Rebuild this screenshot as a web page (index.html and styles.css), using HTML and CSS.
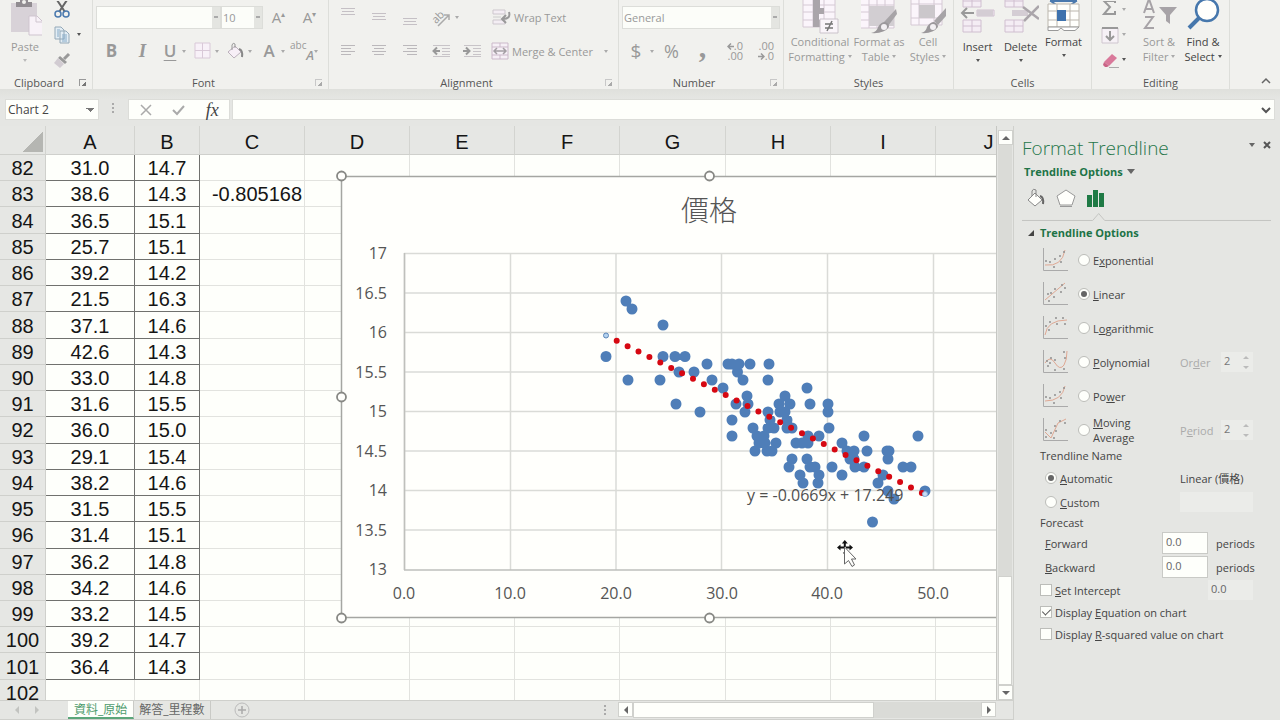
FILE: index.html
```html
<!DOCTYPE html>
<html lang="zh-Hant">
<head>
<meta charset="utf-8">
<title>Format Trendline</title>
<link rel="stylesheet" href="styles.css">
</head>
<body>
<header class="ribbon">
  <section class="group clipboard">
    <div class="group-body">
      <button class="big low" type="button"><svg width="34" height="39" viewBox="0 0 34 39"><path d="M3 3h26v29H3z" fill="#d8d2d8"/><path d="M8 7V2h4V-3h8v5h4v5z" fill="#918c91"/><circle cx="16" cy="2" r="2" fill="#f1f1ee"/><path d="M21 16h8l6 6v13H21z" fill="#f8f2f8" stroke="#cfc5cf"/><path d="M28 16v6h6" fill="none" stroke="#cfc5cf"/></svg><span class="dim">Paste</span><i class="caret pale"></i></button>
      <div class="stack">
        <button type="button" aria-label="Cut"><svg width="18" height="18" viewBox="0 0 18 18"><path d="M4-1l8 12M14-1L6 11" stroke="#666" stroke-width="2" fill="none"/><circle cx="5" cy="13" r="3" fill="none" stroke="#4a79ae" stroke-width="1.5"/><circle cx="13" cy="13" r="3" fill="none" stroke="#4a79ae" stroke-width="1.5"/></svg></button>
        <button type="button" aria-label="Copy"><svg width="18" height="18" viewBox="0 0 18 18"><path d="M2 1h6l3 3v9H2zM7 5h6l3 3v9H7z" fill="#e3edf4" stroke="#94a9b8"/><path d="M4 4h3M4 6h2M4 8h2M4 10h2M9 9h5M9 11h5M9 13h5M9 15h5" stroke="#86abc8"/></svg><i class="caret dark"></i></button>
        <button type="button" aria-label="Format Painter"><svg width="18" height="18" viewBox="0 0 18 18"><path d="M16 3l-5 5" stroke="#999" stroke-width="3"/><path d="M7 5l7 6-2 2-7-6z" fill="#999"/><path d="M5 7l6 6-4 4-6-5z" fill="#d2ccd2"/></svg></button>
      </div>
    </div>
    <footer><span>Clipboard</span><i class="launch strong"></i></footer>
  </section>
  <section class="group font">
    <div class="group-body rows">
      <div class="row">
        <select class="pick face" aria-label="Font"><option></option></select><select class="pick size" aria-label="Font size"><option>10</option></select>
        <button class="glyph grow" type="button">A<sup>▴</sup></button><button class="glyph grow" type="button">A<sup>▾</sup></button>
      </div>
      <div class="row">
        <button class="glyph tool b" type="button">B</button><button class="glyph tool it" type="button">I</button>
        <button class="glyph split un" type="button"><span>U</span><i class="caret"></i></button>
        <button class="split" type="button" aria-label="Borders"><svg width="24" height="18" viewBox="0 0 24 18"><path d="M4 1h15v15H4zM11.500 1v15M4 8.500h15" fill="#f8f1f8" stroke="#d9c9d8"/></svg><i class="caret"></i></button>
        <button class="split" type="button" aria-label="Fill colour"><svg width="24" height="18" viewBox="0 0 24 18"><path d="M4 10l7-6 6 6-7 6z" fill="#f7eff7" stroke="#bbb0bb"/><path d="M8 8V3q1-3 3-1v4" fill="none" stroke="#999"/><path d="M15 7q4 1 3 8" fill="none" stroke="#888" stroke-width="2"/></svg><i class="caret"></i></button>
        <button class="glyph split" type="button"><span>A</span><i class="caret"></i></button>
        <button class="glyph split phon" type="button"><span><small>abc</small><em>A</em></span><i class="caret"></i></button>
      </div>
    </div>
    <footer><span>Font</span><i class="launch"></i></footer>
  </section>
  <section class="group align">
    <div class="group-body align-grid">
      <button type="button" aria-label="Top align"><svg width="16" height="18" viewBox="0 0 16 18"><path d="M1 0.500h14M2 3.500h12M1 6.500h14" stroke="#c5c0c5"/></svg></button>
      <button type="button" aria-label="Middle align"><svg width="16" height="18" viewBox="0 0 16 18"><path d="M1 5.500h14M2 8.500h12M1 11.500h14" stroke="#c5c0c5"/></svg></button>
      <button type="button" aria-label="Bottom align"><svg width="16" height="18" viewBox="0 0 16 18"><path d="M1 10.500h14M2 13.500h12M1 16.500h14" stroke="#c5c0c5"/></svg></button>
      <button class="orient" type="button" aria-label="Orientation"><svg width="22" height="20" viewBox="0 0 22 20"><text x="2" y="16" transform="rotate(-45 5 13)" font-size="11" fill="#999">ab</text><path d="M7 19L18 8M13 8h5v5" fill="none" stroke="#aaa" stroke-width="1.500"/></svg><i class="caret"></i></button>
      <button class="wide" type="button"><svg width="20" height="18" viewBox="0 0 20 18"><path d="M2 2h12v4H2zM2 12h12v4H2z" fill="#f4eef4" stroke="#cdc7cd"/><path d="M2 9h8" stroke="#ccc"/><path d="M18 4q2 7-6 7M15 7l-4 4 4 4" fill="none" stroke="#999" stroke-width="2"/></svg>Wrap Text</button>
      <button type="button" aria-label="Align left"><svg width="16" height="12" viewBox="0 0 16 12"><path d="M1 .5h14M1 3.500h10M1 6.500h14M1 9.500h10" stroke="#bbb8bb"/></svg></button>
      <button type="button" aria-label="Center"><svg width="16" height="12" viewBox="0 0 16 12"><path d="M1 .5h14M3 3.500h10M1 6.500h14M3 9.500h10" stroke="#bbb8bb"/></svg></button>
      <button type="button" aria-label="Align right"><svg width="16" height="12" viewBox="0 0 16 12"><path d="M1 .5h14M5 3.500h10M1 6.500h14M5 9.500h10" stroke="#bbb8bb"/></svg></button>
      <button type="button" aria-label="Decrease indent"><svg width="18" height="14" viewBox="0 0 18 14"><path d="M1 1.500h17M10 4.500h8M10 7.500h8M10 10.500h8M1 12.500h17" stroke="#c8c4c8"/><path d="M1 7h7M5 3.500L1.500 7 5 10.500" fill="none" stroke="#999" stroke-width="2"/></svg></button>
      <button type="button" aria-label="Increase indent"><svg width="18" height="14" viewBox="0 0 18 14"><path d="M1 1.500h17M10 4.500h8M10 7.500h8M10 10.500h8M1 12.500h17" stroke="#c8c4c8"/><path d="M0 7h7M3 3.500L6.500 7 3 10.500" fill="none" stroke="#999" stroke-width="2"/></svg></button>
      <button class="wide" type="button"><svg width="18" height="18" viewBox="0 0 18 18"><path d="M1 1h16v16H1zM1 5h16M1 13h16M9 1v4M9 13v4" fill="#f6f0f6" stroke="#cbb9ca"/><path d="M3 9h12M6 6L3 9l3 3M12 6l3 3-3 3" fill="none" stroke="#a49fa4" stroke-width="1.500"/></svg>Merge &amp; Center<i class="caret end"></i></button>
    </div>
    <footer><span>Alignment</span><i class="launch"></i></footer>
  </section>
  <section class="group number">
    <div class="group-body rows">
      <div class="row"><select class="pick general" aria-label="Number format"><option>General</option></select></div>
      <div class="row">
        <button class="glyph split cur" type="button"><span>$</span><i class="caret"></i></button><button class="glyph tool pct" type="button">%</button><button class="glyph tool comma" type="button">,</button>
        <button class="dec" type="button"><span><svg width="7" height="7" viewBox="0 0 7 7"><path d="M7 3.500H1M4 .5l-3 3 3 3" fill="none" stroke="#999" stroke-width="1.500"/></svg>.0</span><span>.00</span></button>
        <button class="dec" type="button"><span>.00</span><span><svg width="7" height="7" viewBox="0 0 7 7"><path d="M0 3.500h6M3 .5l3 3-3 3" fill="none" stroke="#999" stroke-width="1.500"/></svg>.0</span></button>
      </div>
    </div>
    <footer><span>Number</span><i class="launch"></i></footer>
  </section>
  <section class="group styles">
    <div class="group-body">
      <button class="big" type="button"><svg width="38" height="34" viewBox="0 0 38 34"><path d="M2-3h32v30H2zM12-3v30M23-3v30M2 5h32M2 12h32M2 20h32" fill="#fbf5fb" stroke="#d5c9d4"/><path d="M12 0h7v8h4v6h-5v6h1v7h-7z" fill="#aaa5aa"/><path d="M19 19h18v14H19z" fill="#faf5fa" stroke="#cbc3cb"/><path d="M24 24h8M24 28h8M31 21l-5 10" stroke="#777" stroke-width="1.500"/></svg><span class="dim">Conditional</span><span class="dim">Formatting <i class="caret"></i></span></button>
      <button class="big" type="button"><svg width="36" height="34" viewBox="0 0 36 34"><path d="M-1-3h34v31H-1zM8-3v31M16-3v31M24-3v31M-1 5h34M-1 12h34M-1 20h34" fill="#fbf5fb" stroke="#d5c9d4"/><path d="M8 6h25v20H8z" fill="#d2ced2"/><path d="M35 9L23 22l4 4 9-12z" fill="#a7a4a7"/><path d="M24 22q4 1 4 5-5 7-18 6 6-1 7-6 3-5 7-5z" fill="#9b989b"/><circle cx="23" cy="27" r="3" fill="#f3f0f3"/></svg><span class="dim">Format as</span><span class="dim">Table <i class="caret"></i></span></button>
      <button class="big" type="button"><svg width="36" height="34" viewBox="0 0 36 34"><path d="M1-3h31v28H1zM9-3v28M24-3v28M1 4h31M1 18h31" fill="#fbf5fb" stroke="#d5c9d4"/><path d="M9 5h16v13H9z" fill="#cbc7cb"/><path d="M36 8L24 21l4 4 8-9z" fill="#a7a4a7"/><path d="M24 22q4 1 4 5-5 7-17 6 5-1 6-6 3-5 7-5z" fill="#9b989b"/><circle cx="23" cy="27" r="3" fill="#f3f0f3"/></svg><span class="dim">Cell</span><span class="dim">Styles <i class="caret"></i></span></button>
    </div>
    <footer><span>Styles</span></footer>
  </section>
  <section class="group cells">
    <div class="group-body">
      <button class="big low" type="button"><svg width="36" height="39" viewBox="0 0 36 39"><path d="M3-5h18V7H3zM12-5V7M3 1h18M3 20h18v12H3zM12 20v12M3 26h18M17 10h17v6H17zM25 10v6" fill="#f4edf4" stroke="#d0bfd0"/><path d="M17 10h16v6H17z" fill="#d4cdd4"/><path d="M14 13H3M7 8l-5 5 5 5" fill="none" stroke="#999" stroke-width="2"/></svg><span>Insert</span><i class="caret dark"></i></button>
      <button class="big low" type="button"><svg width="36" height="39" viewBox="0 0 36 39"><path d="M2-5h18V7H2zM11-5V7M2 1h18M2 20h18v12H2zM11 20v12M2 26h18" fill="#f4edf4" stroke="#d0bfd0"/><path d="M9 10h16v6H9z" fill="#d4cdd4"/><path d="M20 7l16 12M36 6L21 21" fill="none" stroke="#aaa5aa" stroke-width="2.500"/></svg><span>Delete</span><i class="caret dark"></i></button>
      <button class="big" type="button"><svg width="36" height="34" viewBox="0 0 36 34"><path d="M4 1h27M10-3L5 1l5 4M25-3l5 4-5 4" fill="none" stroke="#4a79ae" stroke-width="2"/><path d="M2 4h31v23H2zM11 4v23M24 4v23M2 11h31M2 20h31" fill="#fffffc" stroke="#bbb6ad"/><path d="M11 10h9v11h-9z" fill="#3e72ad"/><path d="M2 27h31l-4 3.500H18L15 28l-3 2.500H2z" fill="#fff" stroke="#999"/></svg><span>Format</span><i class="caret dark"></i></button>
    </div>
    <footer><span>Cells</span></footer>
  </section>
  <section class="group editing">
    <div class="group-body">
      <div class="stack">
        <button type="button" aria-label="AutoSum"><svg width="18" height="18" viewBox="0 0 18 18"><path d="M14 2V0H3l6 6-6 7h11v-3" fill="none" stroke="#999" stroke-width="2"/></svg><i class="caret"></i></button>
        <button type="button" aria-label="Fill"><svg width="18" height="18" viewBox="0 0 18 18"><path d="M1 2h16v15H1z" fill="#f6f1f6" stroke="#cfc6cf"/><path d="M1 2h16" stroke="#999" stroke-width="2"/><path d="M9 5v8M5 10l4 4 4-4" fill="none" stroke="#999" stroke-width="2"/></svg><i class="caret"></i></button>
        <button type="button" aria-label="Clear"><svg width="18" height="18" viewBox="0 0 18 18"><path d="M3 11l8-8 5 4-8 8z" fill="#d9799a"/><path d="M3 11l5 4-2 1H4l-2-2z" fill="#c96385"/><path d="M8 16.500h10" stroke="#aaa"/></svg><i class="caret dark"></i></button>
      </div>
      <button class="big" type="button"><svg width="38" height="34" viewBox="0 0 38 34"><path d="M4 13L9-1l5 14M6 9h7M5 17h8L5 28h9" fill="none" stroke="#a7a3a7" stroke-width="2"/><path d="M19 7h18l-7 8v9l-4-3v-6z" fill="#a7a3a7"/></svg><span class="dim">Sort &amp;</span><span class="dim">Filter <i class="caret"></i></span></button>
      <button class="big" type="button"><svg width="36" height="34" viewBox="0 0 36 34"><circle cx="22" cy="10" r="11" fill="#fffffc" stroke="#4677ac" stroke-width="2.500"/><path d="M14 18L4 28" stroke="#4677ac" stroke-width="4"/></svg><span>Find &amp;</span><span>Select <i class="caret dark"></i></span></button>
    </div>
    <footer><span>Editing</span></footer>
  </section>
  <button class="collapse" type="button" aria-label="Collapse ribbon"><svg width="10" height="8" viewBox="0 0 10 8"><path d="M1 6l4-4 4 4" fill="none" stroke="#666" stroke-width="1.500"/></svg></button>
</header>

<div class="formula">
  <select class="name-box" aria-label="Name box"><option>Chart 2</option></select>
  <span class="grip"></span>
  <div class="fx">
    <button type="button" aria-label="Cancel"><svg width="12" height="12" viewBox="0 0 12 12"><path d="M1 1l10 10M11 1L1 11" stroke="#aaa" stroke-width="1.500"/></svg></button>
    <button type="button" aria-label="Enter"><svg width="13" height="12" viewBox="0 0 13 12"><path d="M1 6l4 4 7-8" fill="none" stroke="#aaa" stroke-width="2"/></svg></button>
    <button class="fx-label" type="button">fx</button>
  </div>
  <div class="entry"><input type="text" aria-label="Formula bar"><svg width="10" height="8" viewBox="0 0 10 8"><path d="M1 2l4 4 4-4" fill="none" stroke="#555" stroke-width="2"/></svg></div>
</div>

<main class="work">
  <div class="book">
    <div class="view">
      <div class="sheet">
        <table>
          <colgroup><col class="c-row"><col class="c-a"><col class="c-b"><col class="c-n"><col class="c-n"><col class="c-n"><col class="c-n"><col class="c-w"><col class="c-n"><col class="c-n"><col></colgroup>
          <thead><tr><th class="corner"></th><th>A</th><th>B</th><th>C</th><th>D</th><th>E</th><th>F</th><th>G</th><th>H</th><th>I</th><th>J</th></tr></thead>
          <tbody>
            <tr><th>82<td>31.0<td>14.7<td><td><td><td><td><td><td><td>
            <tr><th>83<td>38.6<td>14.3<td>-0.805168<td><td><td><td><td><td><td>
            <tr><th>84<td>36.5<td>15.1<td><td><td><td><td><td><td><td>
            <tr><th>85<td>25.7<td>15.1<td><td><td><td><td><td><td><td>
            <tr><th>86<td>39.2<td>14.2<td><td><td><td><td><td><td><td>
            <tr><th>87<td>21.5<td>16.3<td><td><td><td><td><td><td><td>
            <tr><th>88<td>37.1<td>14.6<td><td><td><td><td><td><td><td>
            <tr><th>89<td>42.6<td>14.3<td><td><td><td><td><td><td><td>
            <tr><th>90<td>33.0<td>14.8<td><td><td><td><td><td><td><td>
            <tr><th>91<td>31.6<td>15.5<td><td><td><td><td><td><td><td>
            <tr><th>92<td>36.0<td>15.0<td><td><td><td><td><td><td><td>
            <tr><th>93<td>29.1<td>15.4<td><td><td><td><td><td><td><td>
            <tr><th>94<td>38.2<td>14.6<td><td><td><td><td><td><td><td>
            <tr><th>95<td>31.5<td>15.5<td><td><td><td><td><td><td><td>
            <tr><th>96<td>31.4<td>15.1<td><td><td><td><td><td><td><td>
            <tr><th>97<td>36.2<td>14.8<td><td><td><td><td><td><td><td>
            <tr><th>98<td>34.2<td>14.6<td><td><td><td><td><td><td><td>
            <tr><th>99<td>33.2<td>14.5<td><td><td><td><td><td><td><td>
            <tr><th>100<td>39.2<td>14.7<td><td><td><td><td><td><td><td>
            <tr><th>101<td>36.4<td>14.3<td><td><td><td><td><td><td><td>
            <tr class="blank"><th>102<td><td><td><td><td><td><td><td><td><td>
          </tbody>
        </table>
        <svg class="chart" width="748" height="454" viewBox="335 170 748 454" role="img" aria-label="價格">
          <rect x="341.500" y="176.500" width="736" height="441" fill="#fffffc" stroke="#a5a6a2" stroke-width="1.500"/>
          <text class="chart-title" x="709" y="221">價格</text>
          <path d="M404 253.500h673M404 293h673M404 332.500h673M404 372h673M404 411.500h673M404 451h673M404 490.500h673M404 530h673M404.500 253v317M510.500 253v317M616 253v317M721.500 253v317M827.500 253v317M933.500 253v317" stroke="#dadbd7" stroke-width="1.500" fill="none"/>
          <path d="M404 570h673M404.500 253v317" stroke="#bfc0bc" stroke-width="1.500"/>
          <g class="axis y"><text x="387" y="259">17</text><text x="387" y="299">16.5</text><text x="387" y="338">16</text><text x="387" y="378">15.5</text><text x="387" y="417">15</text><text x="387" y="457">14.5</text><text x="387" y="496">14</text><text x="387" y="536">13.5</text><text x="387" y="575">13</text></g>
          <g class="axis x"><text x="404" y="599">0.0</text><text x="510" y="599">10.0</text><text x="616" y="599">20.0</text><text x="722" y="599">30.0</text><text x="827" y="599">40.0</text><text x="933" y="599">50.0</text></g>
          <path class="points" d="M626 301h0M632 309h0M663 325h0M606 356.500h0M663 356.500h0M675 356.500h0M685 356.500h0M707 364h0M728 364h0M732 364h0M739 364h0M750 364h0M769 364h0M628 380h0M660 380h0M679 372h0M694 372h0M712 380h0M723 388h0M737.500 372h0M743 380h0M768 380h0M676 404h0M700 412h0M732 420h0M732 436h0M747 396h0M736 404h0M748 404h0M745 412h0M785 396h0M779 404h0M790 404h0M780 412h0M785 412h0M768 412h0M770 420h0M787 420h0M753 428h0M768 428h0M774 428h0M787 428h0M792 428h0M757 436h0M764 436h0M759 443h0M765 443h0M776 443h0M755 451h0M767 451h0M772 451h0M807 388h0M810 404h0M828 404h0M828 412h0M829 428h0M808 436h0M819 436h0M864 436h0M918 436h0M796 443h0M802 443h0M808 443h0M842 443h0M867 451h0M847 451h0M854 451h0M887 451h0M889 451h0M792 459h0M807 459h0M850 459h0M854 459h0M888 459h0M789 467h0M810 467h0M815 467h0M832 467h0M855 467h0M864 467h0M903 467h0M911 467h0M800 475h0M819 475h0M842 475h0M883 475h0M803 483h0M818 483h0M878 483h0M888 491h0M925 491h0M894 499h0M872.500 522h0"/>
          <path class="trend" d="M616.700 340.700L922 493"/>
          <circle cx="606" cy="335.500" r="2.500" fill="#b5d3f0" stroke="#5c86b8"/><circle cx="925" cy="494" r="2.500" fill="#c9def5" stroke="#8db0dc"/>
          <text class="equation" x="747" y="501">y = -0.0669x + 17.249</text>
          <g fill="#fffffc" stroke="#888985" stroke-width="1.800"><circle cx="341.500" cy="176" r="4.500"/><circle cx="709.500" cy="176" r="4.500"/><circle cx="341.500" cy="397" r="4.500"/><circle cx="341.500" cy="618" r="4.500"/><circle cx="709.500" cy="618" r="4.500"/></g>
          <path d="M844.800 540l3 3.500h-2v3.500h-2v-3.500h-2zM837 547.500l3.500-3v2h3.500v2h-3.500v2zM853 547.500l-3.500-3v2H846v2h3.500v2zM844.800 555l-2-2.500h4z" fill="#111"/>
          <path d="M844.500 547v17l4-3.500 3.500 6 2.500-1.500-3-6h4.500z" fill="#fffffc" stroke="#666"/>
        </svg>
      </div>
      <div class="vscroll"><button type="button" aria-label="Scroll up"><i class="tri up"></i></button><span class="track"></span><span class="thumb"></span><button type="button" aria-label="Scroll down"><i class="tri down"></i></button></div>
    </div>
    <nav class="tabs">
      <div class="tab-nav"><i class="tri left faint"></i><i class="tri right faint"></i></div>
      <button class="tab active" type="button">資料_原始</button><button class="tab" type="button">解答_里程數</button>
      <button class="add" type="button" aria-label="New sheet"><svg width="16" height="16" viewBox="0 0 16 16"><circle cx="8" cy="8" r="7" fill="none" stroke="#bbb"/><path d="M8 4v8M4 8h8" stroke="#aaa" stroke-width="1.500"/></svg></button>
      <span class="grip"></span>
      <div class="hscroll"><button type="button" aria-label="Scroll left"><i class="tri left"></i></button><span class="thumb"></span><span class="track"></span><button type="button" aria-label="Scroll right"><i class="tri right"></i></button></div>
    </nav>
  </div>

  <aside class="pane">
    <div class="pane-head"><h1>Format Trendline</h1><button type="button" aria-label="Pane menu"><i class="tri down slim"></i></button><button type="button" aria-label="Close"><svg width="8" height="8" viewBox="0 0 8 8"><path d="M1 1l6 6M7 1L1 7" stroke="#555" stroke-width="2"/></svg></button></div>
    <button class="pane-sub" type="button">Trendline Options <i class="tri down large"></i></button>
    <div class="pane-icons">
      <button type="button" aria-label="Fill and line"><svg width="20" height="22" viewBox="0 0 20 22"><path d="M2 13l7-7 7 7-7 6z" fill="#fffffc" stroke="#888"/><path d="M6 9V4q1-3 4-1v7" fill="none" stroke="#888"/><path d="M14 9q4 1 3 8" fill="none" stroke="#666" stroke-width="2"/></svg></button>
      <button type="button" aria-label="Effects"><svg width="20" height="22" viewBox="0 0 20 22"><path d="M10 3l9 6-3 9H4L1 9z" fill="#fffffc" stroke="#999"/><path d="M4 19.500h12" stroke="#999"/></svg></button>
      <button type="button" aria-label="Trendline options"><svg width="20" height="22" viewBox="0 0 20 22"><path d="M1 8h5v12H1zM7 3h5v17H7zM13 6h5v14h-5z" fill="#1f7a45"/></svg></button>
    </div>
    <svg class="notch" width="250" height="9" viewBox="0 0 250 9" aria-hidden="true"><path d="M0 8.500h71l6-7 6 7h167" fill="none" stroke="#c4c5c2"/></svg>
    <h2><i class="open"></i>Trendline Options</h2>
    <div class="kinds">
      <div class="kind"><svg width="26" height="24" viewBox="0 0 26 24"><path class="ax" d="M1.500 0v22.500H26"/><path class="fit" d="M3 17Q20 19 23 2"/><path class="dots" d="M4 13h0M8 14h0M13 11h0M18 8h0M22 4h0M12 19h0M19 14h0"/></svg><label><input type="radio" name="kind"><span>E<u>x</u>ponential</span></label></div>
      <div class="kind"><svg width="26" height="24" viewBox="0 0 26 24"><path class="ax" d="M1.500 0v22.500H26"/><path class="fit" d="M3 18L23 1"/><path class="dots" d="M6 12h0M9 11h0M13 7h0M20 3h0M7 19h0M12 15h0M19 10h0M23 6h0"/></svg><label><input type="radio" name="kind" checked><span><u>L</u>inear</span></label></div>
      <div class="kind"><svg width="26" height="24" viewBox="0 0 26 24"><path class="ax" d="M1.500 0v22.500H26"/><path class="fit" d="M3 19Q5 4 25 4"/><path class="dots" d="M4 10h0M8 6h0M14 2h0M21 2h0M7 14h0M15 8h0M23 8h0"/></svg><label><input type="radio" name="kind"><span>L<u>o</u>garithmic</span></label></div>
      <div class="kind"><svg width="26" height="24" viewBox="0 0 26 24"><path class="ax" d="M1.500 0v22.500H26"/><path class="fit" d="M3 13Q8 5 13 13T22 15Q25 10 25 1"/><path class="dots" d="M5 11h0M8 13h0M9 8h0M13 10h0M6 16h0M13 20h0M22 19h0M23 8h0M22 2h0"/></svg><label><input type="radio" name="kind"><span><u>P</u>olynomial</span></label><label class="side" for="order">Or<u>d</u>er</label><span class="spin"><input id="order" type="text" value="2" disabled><i class="tri up faint"></i><i class="tri down faint"></i></span></div>
      <div class="kind"><svg width="26" height="24" viewBox="0 0 26 24"><path class="ax" d="M1.500 0v22.500H26"/><path class="fit" d="M3 17Q20 17 23 2"/><path class="dots" d="M4 13h0M8 14h0M13 11h0M18 8h0M22 4h0M12 19h0M19 14h0"/></svg><label><input type="radio" name="kind"><span>Po<u>w</u>er</span></label></div>
      <div class="kind"><svg width="26" height="24" viewBox="0 0 26 24"><path class="ax" d="M1.500 0v22.500H26"/><path class="fit" d="M3 14l6 6L16 5l8-4"/><path class="dots" d="M4 12h0M4 19h0M9 15h0M12 20h0M14 13h0M13 8h0M18 3h0M23 5h0"/></svg><label><input type="radio" name="kind"><span><u>M</u>oving<br>Average</span></label><label class="side" for="period">P<u>e</u>riod</label><span class="spin"><input id="period" type="text" value="2" disabled><i class="tri up faint"></i><i class="tri down faint"></i></span></div>
    </div>
    <h3>Trendline Name</h3>
    <div class="line indent"><label><input type="radio" name="tname" checked><span><u>A</u>utomatic</span></label><span class="auto-name">Linear (價格)</span></div>
    <div class="line indent"><label><input type="radio" name="tname"><span><u>C</u>ustom</span></label><input class="field off custom" type="text" aria-label="Custom name" disabled></div>
    <h3 class="tight">Forecast</h3>
    <div class="line indent"><label for="fwd"><span><u>F</u>orward</span></label><input class="field num" id="fwd" type="text" value="0.0"><span class="unit">periods</span></div>
    <div class="line indent"><label for="bwd"><span><u>B</u>ackward</span></label><input class="field num" id="bwd" type="text" value="0.0"><span class="unit">periods</span></div>
    <div class="line short"><label><input type="checkbox"><span><u>S</u>et Intercept</span></label><input class="field off icpt" type="text" value="0.0" aria-label="Intercept" disabled></div>
    <div class="line short"><label><input type="checkbox" checked><span>Display <u>E</u>quation on chart</span></label></div>
    <div class="line short"><label><input type="checkbox"><span>Display <u>R</u>-squared value on chart</span></label></div>
  </aside>
</main>
</body>
</html>
```

FILE: styles.css
```css
* { box-sizing: border-box; }
body { margin: 0; height: 100vh; display: flex; flex-direction: column; overflow: hidden; background: #e5e6e3; color: #444; font: 12px/15px "Open Sans", "Noto Sans", "Noto Sans CJK TC", sans-serif; }
button, input, select { font: inherit; color: inherit; margin: 0; padding: 0; border: 0; border-radius: 0; background: none; }
svg { flex: none; display: block; }

.caret { display: inline-block; flex: none; border: 2px solid transparent; border-top-color: #aaa; border-top-width: 3px; border-bottom: 0; vertical-align: middle; }
.caret.dark { border-top-color: #555; }
.caret.pale { border-top-color: #bbb; }
.tri { display: block; width: 0; height: 0; border: 4px solid transparent; }
.tri.up { border-bottom-color: #666; border-top: 0; }
.tri.down { border-top-color: #666; border-bottom: 0; }
.tri.left { border-right-color: #666; border-left: 0; }
.tri.right { border-left-color: #666; border-right: 0; }
.tri.large { border-width: 5px 4px 0; }
.tri.slim { border-width: 4px 3px 0; }
.tri.left.faint { border-right-color: #c2c3c0; }
.tri.right.faint { border-left-color: #c2c3c0; }
.grip { width: 2px; height: 11px; background: repeating-linear-gradient(#aaa 0 2px, transparent 2px 4px); }

/* Ribbon */
.ribbon { display: flex; flex: none; height: 89px; background: #f1f1ee; font-size: 11px; }
.group { display: flex; flex-direction: column; flex: none; border-right: 1px solid #dddeda; }
.group-body { display: flex; height: 74px; }
.group footer { display: flex; height: 15px; line-height: 17px; color: #555; position: relative; justify-content: center; }
.launch { position: absolute; right: 6px; top: 5px; width: 7px; height: 7px; border: solid #c8c8c8; border-width: 1px 0 0 1px; background: linear-gradient(135deg, transparent 5px, #aaa 5px); }
.launch.strong { border-color: #999; background: linear-gradient(135deg, transparent 5px, #777 5px); }
.clipboard { width: 93px; }
.clipboard footer { padding-right: 14px; }
.font { width: 236px; }
.font footer { padding-right: 14px; }
.align { width: 290px; }
.align footer { padding-right: 14px; }
.number { width: 165px; }
.number footer { padding-right: 14px; }
.styles { width: 170px; }
.cells { width: 138px; }
.editing { width: 138px; }
.big { display: flex; flex-direction: column; align-items: center; line-height: 15px; white-space: nowrap; }
.big > .caret { margin-top: 5px; }
.big span .caret { margin-bottom: 3px; }
.dim { color: #999; }
.clipboard .big { width: 50px; }
.styles .group-body { padding-left: 4px; }
.styles .big { width: 64px; }
.styles .big + .big { width: 54px; }
.styles .big + .big + .big { width: 44px; }
.cells .group-body { padding-left: 2px; }
.cells .big { width: 43px; }
.editing .big { width: 44px; }
.stack { display: flex; flex-direction: column; gap: 6px; }
.stack button { display: flex; align-items: center; height: 19px; gap: 6px; }
.clipboard .stack { padding-left: 3px; }
.editing .stack { width: 45px; padding-left: 9px; }
.editing .stack button { gap: 3px; }
.rows { flex-direction: column; gap: 10px; padding: 5px 3px; }
.row { display: flex; height: 24px; align-items: center; }
.pick { appearance: none; height: 23px; color: #999; border: 1px solid #dcddd9; padding-left: 1px; background: linear-gradient(#aaa, #aaa) right 2px center / 4px 2px no-repeat, linear-gradient(#e4e5e1, #e4e5e1) right / 8px 100% no-repeat, #fcfdf9; }
.face { width: 125px; }
.size { width: 42px; }
.general { width: 158px; }
.glyph { color: #999; font-size: 17px; font-weight: 600; line-height: 22px; }
.grow { width: 31px; font-size: 15px; font-weight: 400; }
.grow sup { font-size: 8px; line-height: 8px; }
.tool { width: 31px; }
.b { font-weight: 700; }
.it { font-family: "Liberation Serif", serif; font-style: italic; font-size: 19px; }
.split { display: flex; width: 33px; align-items: center; }
.split > span { width: 24px; text-align: center; }
.un > span { text-decoration: underline; text-underline-offset: 3px; text-decoration-thickness: 1px; }
.phon > span { display: flex; flex-direction: column; font-size: 13px; line-height: 11px; text-align: right; }
.phon small { font-size: 10px; font-weight: 400; line-height: 9px; text-align: left; }
.cur { width: 34px; font-size: 19px; font-weight: 400; }
.cur > span { width: 28px; }
.pct { font-size: 18px; font-weight: 400; }
.comma { font: 700 30px/16px "Liberation Serif", serif; height: 24px; padding-bottom: 12px; }
.dec { width: 31px; display: flex; flex-direction: column; align-items: flex-end; padding-right: 6px; color: #999; line-height: 10px; }
.dec span { display: flex; align-items: center; }
.align-grid { display: grid; grid-template-columns: repeat(5, 31px) 1fr; grid-template-rows: 24px 24px; row-gap: 10px; padding: 5px 3px; align-content: start; }
.align-grid button { display: flex; align-items: center; justify-content: center; color: #999; }
.align-grid .orient { grid-column: span 2; justify-content: flex-start; padding-left: 6px; gap: 2px; }
.align-grid .wide { justify-content: flex-start; padding-left: 4px; gap: 3px; white-space: nowrap; }
.wide .end { margin-left: 8px; }
.collapse { margin-left: auto; align-self: flex-end; padding: 0 9px 4px; }

/* Formula bar */
.formula { display: flex; flex: none; height: 37px; padding: 10px 5px 6px; align-items: stretch; background: linear-gradient(#dfe0dc, #e5e6e3 10px); }
.name-box { appearance: none; width: 94px; padding-left: 2px; border: 1px solid #dcddd9; background: conic-gradient(from 315deg at 50% 100%, #777 90deg, transparent 0) right 4px center / 8px 4px no-repeat, #fefffb; }
.formula .grip { margin: 4px 14px 0 13px; }
.fx { display: flex; width: 102px; background: #fefffb; border: 1px solid #dcddd9; }
.fx button { flex: 1; display: flex; align-items: center; justify-content: center; }
.fx .fx-label { font: italic 18px/18px "Liberation Serif", serif; color: #444; }
.entry { flex: 1; display: flex; align-items: center; margin-left: 2px; padding-right: 3px; background: #fefffb; border: 1px solid #dcddd9; }
.entry input { flex: 1; min-width: 0; height: 18px; outline: 0; }

/* Workbook */
.work { display: flex; flex: 1; min-height: 0; }
.book { display: flex; flex-direction: column; flex: 1; min-width: 0; }
.view { display: flex; flex: 1; min-height: 0; }
.sheet { position: relative; flex: 1; min-width: 0; overflow: hidden; background: #fefffb; }
table { table-layout: fixed; width: 100%; min-width: 1042px; height: 580px; border-collapse: separate; border-spacing: 0; font: 20px/24px "Liberation Sans", Arial, sans-serif; color: #151515; }
.c-row { width: 46px; }
.c-a { width: 89px; }
.c-b { width: 65px; }
.c-n { width: 105px; }
.c-w { width: 106px; }
th, td { padding: 1px 0 0; text-align: center; font-weight: 400; border: solid #e2e3df; border-width: 0 1px 1px 0; }
th { background: #e6e7e4; border-color: #cfd0cc; }
thead tr { height: 29px; }
thead th { padding-top: 4px; border-right-color: #d3d4d0; }
.corner { background: linear-gradient(135deg, transparent 50%, #b5b6b2 50%) right 2px bottom 2px / 21px 21px no-repeat, #e6e7e4; }
tbody tr:not(.blank) td:nth-child(2), tbody tr:not(.blank) td:nth-child(3) { border-color: #70716e; }
td:nth-child(4) { text-align: right; padding-right: 2px; }
.chart { position: absolute; left: 335px; top: 44px; }
.chart-title { font-family: "Noto Sans CJK TC", sans-serif; font-weight: 300; font-size: 28px; text-anchor: middle; fill: #555; }
.axis { font-size: 16px; fill: #555; }
.axis.y { text-anchor: end; }
.axis.x { text-anchor: middle; }
.equation { font-size: 16px; fill: #505050; }
.points { fill: none; stroke: #4f7eb8; stroke-width: 11px; stroke-linecap: round; }
.trend { fill: none; stroke: #d60812; stroke-width: 6px; stroke-linecap: round; stroke-dasharray: 0 12.180; }
.vscroll { flex: none; display: flex; flex-direction: column; width: 17px; padding: 4px 1px 0; border-left: 1px solid #c6c7c3; }
.vscroll button, .hscroll button { flex: none; display: flex; width: 15px; height: 15px; align-items: center; justify-content: center; background: #fefffb; border: 1px solid #d0d1cd; }
.vscroll .track { flex: 433; background: #dadbd7; }
.vscroll .thumb { flex: 107; background: #fefffb; border: 1px solid #d0d1cd; }
.tabs { display: flex; flex: none; height: 20px; align-items: stretch; border-top: 1px solid #cfd0cc; border-bottom: 1px solid #cfd0cc; }
.tab-nav { display: flex; width: 68px; padding-left: 15px; gap: 16px; align-items: center; }
.tab { padding: 0 5px 2px; font-size: 12px; line-height: 15px; color: #666; border-right: 1px solid #c9cac6; }
.tab.active { padding: 0 6px; background: #fefffb; color: #4e9b6d; border-bottom: 2px solid #5ba67a; }
.add { margin-left: 23px; display: flex; align-items: center; }
.tabs .grip { margin: 4px 12px 0 auto; }
.hscroll { display: flex; width: 378px; margin-right: 17px; padding: 1px 0; }
.hscroll .thumb { flex: 240; background: #fefffb; border: 1px solid #d0d1cd; }
.hscroll .track { flex: 108; background: #dadbd7; }

/* Format pane */
.pane { flex: 0 0 267px; padding: 8px 9px 0 8px; border-left: 1px solid #cfd0cc; font-size: 11px; line-height: 15px; }
.pane h1, .pane h2, .pane h3 { margin: 0; }
.pane-head { display: flex; align-items: center; gap: 8px; }
.pane h1 { flex: 1; font-weight: 300; font-size: 19px; line-height: 28px; color: #26764a; }
.pane-head button { margin-bottom: 6px; }
.pane-sub { display: flex; align-items: center; gap: 4px; margin: 2px 0 0 2px; font-weight: 700; color: #207346; }
.pane-icons { display: flex; gap: 10px; margin: 8px 0 0 4px; }
.pane-icons button { display: flex; }
.notch { width: 100%; margin-top: 3px; }
.pane h2 { display: flex; align-items: center; gap: 6px; margin-top: 4px; padding-left: 6px; font-size: 11px; line-height: 15px; color: #207346; }
.open { border: 3px solid #444; border-top-color: transparent; border-left-color: transparent; }
.kinds { margin: 3px 0 0 20px; }
.kind { display: grid; grid-template-columns: 36px 102px 41px 32px; align-items: center; height: 34px; }
.ax { fill: none; stroke: #aaa; }
.fit { fill: none; stroke: #dfa893; }
.dots { fill: none; stroke: #909090; stroke-width: 2px; stroke-linecap: round; }
label { display: flex; align-items: center; gap: 3px; }
.side { color: #aaa; display: block; }
u { text-underline-offset: 1px; }
input[type="radio"], input[type="checkbox"] { appearance: none; display: grid; place-content: center; flex: none; width: 12px; height: 12px; background: #fefffb; border: 1px solid #bcbdb9; }
input[type="radio"] { border-radius: 50%; }
input[type="radio"]:checked::after { content: ""; width: 6px; height: 6px; border-radius: 50%; background: #666; }
input[type="checkbox"]:checked::after { content: ""; width: 4px; height: 7px; margin-bottom: 2px; border: solid #555; border-width: 0 1px 1px 0; transform: rotate(45deg); }
.spin { display: grid; grid-template-columns: 22px 8px; grid-template-rows: 10px 10px; align-items: center; background: #ebece9; width: 32px; }
.spin input { grid-row: span 2; width: 20px; padding: 0 0 3px 3px; color: #777; }
.spin .tri { border-width: 0 3px 3px; border-bottom-color: #bbb; }
.spin .tri.down { border-width: 3px 3px 0; border-top-color: #bbb; grid-column: 2; }
.pane h3 { margin: 1px 0 3px 18px; font-size: 11px; font-weight: 400; line-height: 15px; }
.pane h3.tight { margin: 1px 0 1px 18px; }
.line { display: flex; align-items: center; height: 24px; padding: 0 18px; }
.line.indent { padding-left: 23px; }
.line.short { height: 22px; }
.auto-name { margin-left: auto; width: 73px; white-space: nowrap; }
.field { margin-left: auto; height: 22px; padding: 0 3px 4px; background: #fefffb; border: 1px solid #c9cac6; color: #666; }
.field.off { background: #ebece9; border: 0; height: 20px; }
.custom { width: 73px; }
.num { width: 46px; }
.unit { width: 37px; margin-left: 8px; }
.icpt { width: 45px; }
```
